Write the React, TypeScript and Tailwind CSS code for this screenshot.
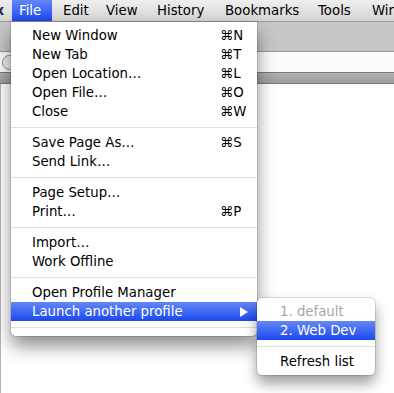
type Row = { label: string; shortcut?: string; active?: boolean; submenu?: boolean };

const groups: Row[][] = [
  [
    { label: 'New Window', shortcut: '⌘N' },
    { label: 'New Tab', shortcut: '⌘T' },
    { label: 'Open Location…', shortcut: '⌘L' },
    { label: 'Open File…', shortcut: '⌘O' },
    { label: 'Close', shortcut: '⌘W' },
  ],
  [{ label: 'Save Page As…', shortcut: '⌘S' }, { label: 'Send Link…' }],
  [{ label: 'Page Setup…' }, { label: 'Print…', shortcut: '⌘P' }],
  [{ label: 'Import…' }, { label: 'Work Offline' }],
  [{ label: 'Open Profile Manager' }, { label: 'Launch another profile', active: true, submenu: true }],
];

const highlight = 'bg-gradient-to-b from-[#6486f6] to-[#1b45f0] text-white';

function Separator() {
  return (
    <div className="flex h-[12px] items-center">
      <div className="h-px w-full bg-[#e0e0e0]" />
    </div>
  );
}

function MenuRow({ row }: { row: Row }) {
  return (
    <div className={`flex h-[19px] items-center ${row.active ? highlight : 'text-black'}`}>
      <span className="flex-1 pl-[21px] whitespace-nowrap">{row.label}</span>
      {row.submenu ? (
        <span className="flex w-[37px] items-center pl-[20px]">
          <svg width="8" height="10" viewBox="0 0 8 10">
            <path d="M0 0 L8 5 L0 10 Z" fill="white" />
          </svg>
        </span>
      ) : (
        <span className="w-[37px] whitespace-nowrap">{row.shortcut}</span>
      )}
    </div>
  );
}

const barItems = [
  { label: 'Edit', w: 'w-[43px]' },
  { label: 'View', w: 'w-[51px]' },
  { label: 'History', w: 'w-[68px]' },
  { label: 'Bookmarks', w: 'w-[93px]' },
  { label: 'Tools', w: 'w-[54px]' },
  { label: 'Window', w: 'w-[60px]' },
];

export default function App() {
  return (
    <div className="relative h-[393px] w-[394px] overflow-hidden bg-white font-['DejaVu_Sans',sans-serif] text-[13.3px] leading-none">
      {/* menu bar */}
      <div className="flex h-[22px] items-stretch overflow-hidden border-b border-[#9c9c9c] bg-gradient-to-b from-[#efefef] to-[#d4d4d4] whitespace-nowrap">
        <div className="flex w-[12px] shrink-0 items-center justify-end overflow-hidden pr-[8px]">
          <span className="shrink-0 font-bold text-[#1e2540]">Firefox</span>
        </div>
        <div className={`flex w-[40px] shrink-0 items-center pl-[7px] ${highlight}`}>File</div>
        <div className="w-[11px] shrink-0" />
        {barItems.map((b) => (
          <div key={b.label} className={`flex shrink-0 items-center text-black ${b.w}`}>
            {b.label}
          </div>
        ))}
      </div>

      {/* browser window behind */}
      <div className="h-[30px] border-b border-[#9a9a9a] bg-[#c6c6c6]" />
      <div className="flex h-[20px] items-center bg-[#fbfbfb]">
        <div className="ml-[2px] h-[15px] w-[15px] rounded-full border border-[#8c8c8c] bg-[#ececec]" />
      </div>
      <div className="h-[12px] border-y border-[#7a7a7a] bg-gradient-to-b from-[#b0b0b0] to-[#9c9c9c]" />
      <div className="h-[320px] border-l border-[#b4b4b4] bg-white" />

      {/* File menu */}
      <div className="absolute left-[11px] top-[22px] w-[246px] rounded-b-[5px] bg-white pb-[3px] pt-[4px] shadow-[0_0_0_1px_rgba(0,0,0,0.12),0_10px_18px_rgba(0,0,0,0.45)]">
        {groups.map((g, i) => (
          <div key={i}>
            {i > 0 && <Separator />}
            {g.map((r) => (
              <MenuRow key={r.label} row={r} />
            ))}
          </div>
        ))}
        <Separator />
      </div>

      {/* profile submenu */}
      <div className="absolute left-[257px] top-[298px] w-[118px] overflow-hidden rounded-[5px] bg-white py-[4px] shadow-[0_0_0_1px_rgba(0,0,0,0.12),0_8px_14px_rgba(0,0,0,0.4)]">
        <div className="flex h-[19px] items-center pl-[23px] text-[#a6a6a6]">1. default</div>
        <div className={`flex h-[19px] items-center pl-[23px] ${highlight}`}>2. Web Dev</div>
        <Separator />
        <div className="flex h-[19px] items-center pl-[23px] text-black">Refresh list</div>
      </div>
    </div>
  );
}
